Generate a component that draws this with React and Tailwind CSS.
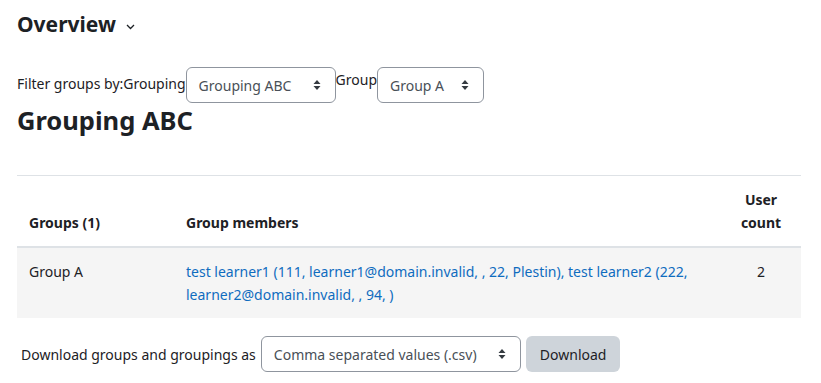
import React from 'react';

const Arrows = () => (
  <svg width="8" height="12" viewBox="0 0 8 12" className="shrink-0">
    <path d="M4 1 L7.5 5 H0.5 Z M4 11 L0.5 7 H7.5 Z" fill="#343a40" />
  </svg>
);

const Select = ({ value, className }) => (
  <div
    className={`flex h-9 items-center justify-between rounded-md border border-[#8f959e] bg-white pl-3 pr-[14px] text-[14px] text-[#495057] ${className}`}
  >
    <span>{value}</span>
    <Arrows />
  </div>
);

const App = () => {
  return (
    <div className="min-h-[383px] bg-white pl-[17px] pr-[20px] pt-[10px] font-['Segoe_UI','Noto_Sans',sans-serif] text-[14px] text-[#1d2125]">
      <div className="flex items-center gap-[10px]">
        <h2 className="text-[21px] font-bold leading-[28px]">Overview</h2>
        <svg width="9" height="6" viewBox="0 0 9 6" className="mt-[5px]">
          <path d="M1 1 L4.5 4.5 L8 1" fill="none" stroke="#1d2125" strokeWidth="1.3" />
        </svg>
      </div>

      <div className="mt-[29px] flex items-start">
        <span className="mt-[7px] leading-[20px]">Filter groups by:Grouping</span>
        <Select value="Grouping ABC" className="w-[150px]" />
        <span className="mt-[3px] leading-[20px]">Group</span>
        <Select value="Group A" className="w-[107px]" />
      </div>

      <h3 className="mt-[1px] text-[25.5px] font-bold leading-[32px]">Grouping ABC</h3>

      <div className="mt-[39px] border-t border-[#dee2e6]">
        <table className="w-full border-collapse">
          <thead>
            <tr className="border-b-2 border-[#dee2e6] font-bold">
              <th className="w-[157px] px-3 py-3 text-left align-bottom leading-[23px]">Groups (1)</th>
              <th className="px-3 py-3 text-left align-bottom leading-[23px]">Group members</th>
              <th className="w-[80px] px-3 py-3 text-center align-bottom leading-[23px]">User count</th>
            </tr>
          </thead>
          <tbody>
            <tr className="bg-[#f5f5f5]">
              <td className="px-3 py-3 align-top leading-[23px]">Group A</td>
              <td className="px-3 py-3 align-top leading-[23px] text-[#0f6cbf]">
                test learner1 (111, learner1@domain.invalid, , 22, Plestin), test learner2 (222,
                learner2@domain.invalid, , 94, )
              </td>
              <td className="px-3 py-3 text-center align-top leading-[23px]">2</td>
            </tr>
          </tbody>
        </table>
      </div>

      <div className="mt-[18px] flex items-center pl-1">
        <span className="mr-[5px]">Download groups and groupings as</span>
        <Select value="Comma separated values (.csv)" className="w-[260px]" />
        <button className="ml-[5px] h-9 rounded-md bg-[#ced4da] px-[14px] text-[14px] text-[#1d2125]">
          Download
        </button>
      </div>
    </div>
  );
};

export default App;
